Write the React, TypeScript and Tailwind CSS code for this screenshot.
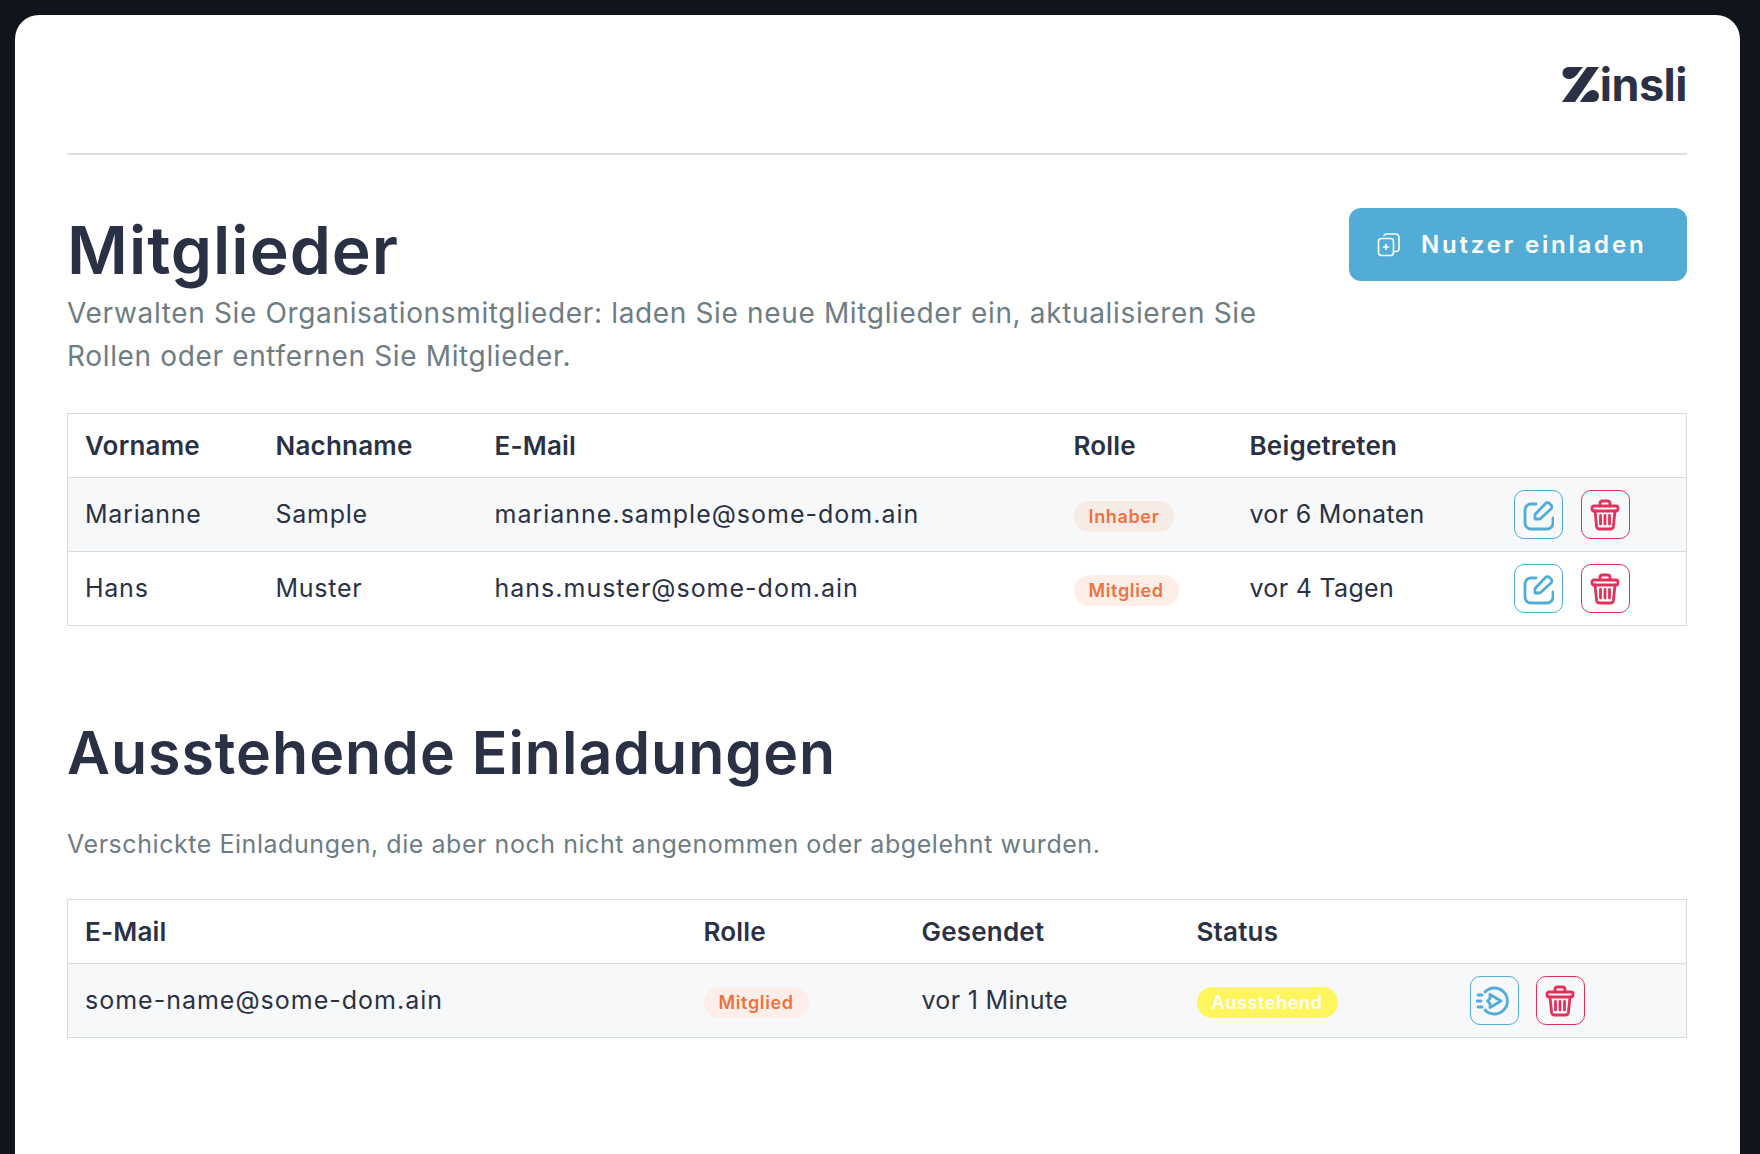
const font = { fontFamily: 'Inter, sans-serif' }

function EditIcon() {
  return (
    <svg width="32" height="32" viewBox="0 0 32 32" fill="none" stroke="currentColor" strokeWidth="2.8" strokeLinecap="round" strokeLinejoin="round">
      <path d="M14 5H9a6 6 0 0 0-6 6v13a6 6 0 0 0 6 6h16a6 6 0 0 0 6-6v-5" />
      <path d="M13 20v-4.500L23.500 4.500a2.800 2.800 0 0 1 4 0L29 6a2.800 2.800 0 0 1 0 4L18 20z" />
    </svg>
  )
}

function TrashIcon() {
  return (
    <svg width="30" height="34" viewBox="0 0 30 32" fill="none" stroke="currentColor" strokeWidth="2.800" strokeLinecap="round" strokeLinejoin="round">
      <path d="M10 7V4.500A2.500 2.500 0 0 1 12.500 2h5A2.500 2.500 0 0 1 20 4.500V7" />
      <rect x="2" y="7" width="26" height="5" rx="2" />
      <path d="M5 12l1.600 15.500A3 3 0 0 0 9.600 30h10.800a3 3 0 0 0 3-2.500L25 12" />
      <path d="M10.500 16.500v8.500M15 16.500v8.500M19.500 16.500v8.500" />
    </svg>
  )
}

function ResendIcon() {
  return (
    <svg width="36" height="32" viewBox="0 0 36 32" fill="none" stroke="currentColor" strokeWidth="2.800" strokeLinecap="round" strokeLinejoin="round">
      <path d="M9 7a13 13 0 1 1 0 18" />
      <path d="M14 9.500 25 16l-11 6.500v-4L11.500 16l2.500-2.500z" />
      <path d="M2 10h4M1 16h4M2 22h4" />
    </svg>
  )
}

function InviteIcon() {
  return (
    <svg width="24" height="24" viewBox="0 0 24 24" fill="none" stroke="currentColor" strokeWidth="1.600" strokeLinecap="round" strokeLinejoin="round">
      <rect x="1.500" y="5.500" width="15" height="17" rx="3" />
      <path d="M7 2.500a2.500 2.500 0 0 1 2.500-1.500h9A3.500 3.500 0 0 1 22 4.500v11a3 3 0 0 1-3 3h-2.500" />
      <path d="M9 11.500v5M6.500 14h5" />
    </svg>
  )
}

function Logo() {
  return (
    <div className="flex items-center justify-end gap-[1px] text-[#2a3145]">
      <svg width="37" height="36" viewBox="0 0 37 36" fill="currentColor">
        <path d="M6 0H21C17 4 14 12 7 12A6 6 0 0 1 6 0Z" />
        <path d="M25 0H37L13 35H0Z" />
        <path d="M18 35C22 28 26 23 31 23A6 6 0 0 1 31 35Z" />
      </svg>
      <span className="text-[45px] leading-[36px] font-bold tracking-[-0.5px]" style={font}>insli</span>
    </div>
  )
}

function Badge({ label, tone }: { label: string; tone: 'owner' | 'member' | 'pending' }) {
  const cls = {
    owner: 'bg-[#f7ebe6] text-[#ee7240]',
    member: 'bg-[#fdeee9] text-[#ee7240]',
    pending: 'bg-[#fff55c] text-white',
  }[tone]
  return (
    <span className={`inline-block rounded-full px-[15px] h-[31px] leading-[31px] text-[18px] font-semibold tracking-[0.65px] ${cls}`}>
      {label}
    </span>
  )
}

function ActionButton({ tone, children }: { tone: 'blue' | 'red'; children: React.ReactNode }) {
  const cls = tone === 'blue' ? 'border-[#52acd6] text-[#52acd6]' : 'border-[#e2325c] text-[#e2325c]'
  return (
    <span className={`flex h-[49px] w-[49px] items-center justify-center rounded-[10px] border ${cls}`}>
      {children}
    </span>
  )
}

const th = 'h-[64px] px-[17px] text-left text-[26px] font-semibold tracking-[0.2px] text-[#2a3145]'
const td = 'h-[74px] px-[17px] text-[25px] tracking-[0.75px] text-[#2a3145]'
const tdMail = 'h-[74px] px-[17px] text-[25px] tracking-[1px] text-[#2a3145]'
const tdDate = 'h-[74px] px-[17px] text-[25px] tracking-[0.3px] text-[#2a3145]'

function MembersTable() {
  const rows = [
    { first: 'Marianne', last: 'Sample', mail: 'marianne.sample@some-dom.ain', role: 'Inhaber', tone: 'owner' as const, joined: 'vor 6 Monaten' },
    { first: 'Hans', last: 'Muster', mail: 'hans.muster@some-dom.ain', role: 'Mitglied', tone: 'member' as const, joined: 'vor 4 Tagen' },
  ]
  return (
    <table className="w-full table-fixed border border-[#d5dcdf] border-collapse">
      <colgroup>
        <col className="w-[191px]" />
        <col className="w-[219px]" />
        <col className="w-[579px]" />
        <col className="w-[176px]" />
        <col className="w-[264px]" />
        <col />
      </colgroup>
      <thead>
        <tr>
          <th className={th}>Vorname</th>
          <th className={th}>Nachname</th>
          <th className={th}>E-Mail</th>
          <th className={th}>Rolle</th>
          <th className={th}>Beigetreten</th>
          <th className={th}></th>
        </tr>
      </thead>
      <tbody>
        {rows.map((r, i) => (
          <tr key={r.mail} className={`border-t border-[#d5dcdf] ${i === 0 ? 'bg-[#f7f8fa]' : 'bg-white'}`}>
            <td className={td}>{r.first}</td>
            <td className={td}>{r.last}</td>
            <td className={tdMail}>{r.mail}</td>
            <td className={td}><Badge label={r.role} tone={r.tone} /></td>
            <td className={tdDate}>{r.joined}</td>
            <td className={td}>
              <div className="flex gap-[18px]">
                <ActionButton tone="blue"><EditIcon /></ActionButton>
                <ActionButton tone="red"><TrashIcon /></ActionButton>
              </div>
            </td>
          </tr>
        ))}
      </tbody>
    </table>
  )
}

function InvitesTable() {
  return (
    <table className="w-full table-fixed border border-[#d5dcdf] border-collapse">
      <colgroup>
        <col className="w-[619px]" />
        <col className="w-[218px]" />
        <col className="w-[275px]" />
        <col className="w-[273px]" />
        <col />
      </colgroup>
      <thead>
        <tr>
          <th className={th}>E-Mail</th>
          <th className={th}>Rolle</th>
          <th className={th}>Gesendet</th>
          <th className={th}>Status</th>
          <th className={th}></th>
        </tr>
      </thead>
      <tbody>
        <tr className="border-t border-[#d5dcdf] bg-[#f7f8fa]">
          <td className={tdMail}>some-name@some-dom.ain</td>
          <td className={td}><Badge label="Mitglied" tone="member" /></td>
          <td className={tdDate}>vor 1 Minute</td>
          <td className={td}><Badge label="Ausstehend" tone="pending" /></td>
          <td className={td}>
            <div className="flex gap-[17px]">
              <ActionButton tone="blue"><ResendIcon /></ActionButton>
              <ActionButton tone="red"><TrashIcon /></ActionButton>
            </div>
          </td>
        </tr>
      </tbody>
    </table>
  )
}

export default function App() {
  return (
    <div className="h-[1154px] overflow-hidden bg-[#10141d] pl-[15px] pr-[20px] pt-[15px]" style={font}>
      <div className="h-full rounded-t-[24px] bg-white pl-[52px] pr-[53px] pt-[52px]">
        <header className="border-b-2 border-[#d9e0e2] pb-[50px]">
          <Logo />
        </header>

        <section className="mt-[55px] flex items-start justify-between">
          <div className="w-[1200px]">
            <h1 className="text-[66px] leading-[80px] font-semibold tracking-[1px] text-[#2a3145]">Mitglieder</h1>
            <p className="mt-[2px] text-[28px] leading-[43px] tracking-[0.65px] text-[#6e7c84]">
              Verwalten Sie Organisationsmitglieder: laden Sie neue Mitglieder ein, aktualisieren Sie Rollen oder entfernen Sie Mitglieder.
            </p>
          </div>
          <button className="-mt-[2px] flex h-[73px] w-[338px] items-center gap-[20px] rounded-[12px] bg-[#52acd6] pl-[28px] text-[24px] font-semibold tracking-[2.8px] text-white">
            <InviteIcon />
            Nutzer einladen
          </button>
        </section>

        <div className="mt-[35px]"><MembersTable /></div>

        <h2 className="mt-[91px] text-[59px] leading-[72px] font-semibold tracking-[1px] text-[#2a3145]">Ausstehende Einladungen</h2>
        <p className="mt-[37px] text-[25px] leading-[36px] tracking-[0.55px] text-[#6e7c84]">
          Verschickte Einladungen, die aber noch nicht angenommen oder abgelehnt wurden.
        </p>

        <div className="mt-[37px]"><InvitesTable /></div>
      </div>
    </div>
  )
}
